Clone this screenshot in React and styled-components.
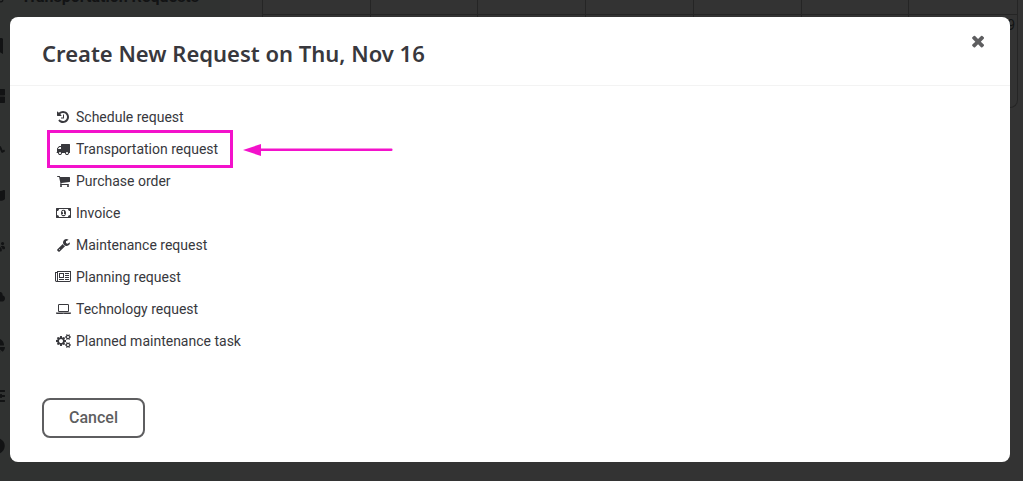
import React from 'react';
import styled, { createGlobalStyle } from 'styled-components';
import { FaBookmark, FaThLarge, FaWheelchair, FaFlag, FaUsers, FaCloud, FaChartPie, FaSlidersH, FaCircle, FaTruck } from 'react-icons/fa';

const GlobalStyle = createGlobalStyle`
    * {
        box-sizing: border-box;
    }
    body {
        margin: 0;
        overflow: hidden;
        font-family: Roboto, sans-serif;
        font-size: 14px;
        color: #38383d;
        background: #333333;
    }
`;

const Page = styled.div`
    display: grid;
    grid-template-columns: 230px 1fr;
    height: 100vh;
    overflow: hidden;
`;

const Sidebar = styled.nav`
    overflow: hidden;
    background: #303231;
    color: #121314;
`;

const SidebarLink = styled.a`
    display: flex;
    align-items: center;
    gap: 16px;
    height: 50px;
    margin-left: -11px;
    color: inherit;
    font-size: 16px;
    font-weight: 700;
    text-decoration: none;

    &:first-child {
        margin-top: -29px;
    }
`;

const Main = styled.main`
    padding: 0 5px 0 32px;
    overflow: hidden;
`;

const Calendar = styled.div`
    display: grid;
    grid-template-columns: repeat(7, 1fr);
    grid-template-rows: 15px 92px;
    border: 1px solid #252525;
    border-top: 0;
    border-radius: 0 0 8px 8px;
`;

const Day = styled.div`
    border-right: 1px solid #252525;
    border-bottom: ${(props) => (props.$last ? '0' : '1px solid #252525')};
    padding: 2px;
    font-size: 14px;
    text-align: right;
    color: #121314;

    &:nth-child(7n) {
        border-right: 0;
    }
`;

const Backdrop = styled.div`
    position: fixed;
    inset: 0;
    padding: 17px 13px 19px 10px;
`;

const Modal = styled.section`
    background: #ffffff;
    border-radius: 8px;
`;

const ModalHeader = styled.header`
    display: flex;
    justify-content: space-between;
    align-items: flex-start;
    padding: 15px 25px 14px 32px;
    border-bottom: 1px solid #f3f3f3;
`;

const Title = styled.h2`
    margin: 0;
    padding-top: 3px;
    font-family: 'Noto Sans', sans-serif;
    font-size: 22px;
    line-height: 36px;
    font-weight: 600;
`;

const CloseButton = styled.button`
    display: flex;
    padding: 0;
    border: 0;
    background: none;
    color: #5e5e60;
    cursor: pointer;
`;

const ModalBody = styled.div`
    padding: 15px 32px 24px;
`;

const RequestList = styled.ul`
    margin: 0 0 41px;
    padding: 0 8px;
    list-style: none;
`;

const RequestItem = styled.li`
    display: flex;
    align-items: center;
    gap: 13px;
`;

const RequestLink = styled.a`
    display: flex;
    align-items: center;
    gap: 4px;
    height: 32px;
    padding: 0 12px 0 4px;
    color: inherit;
    text-decoration: none;
    outline: ${(props) => (props.$marked ? '3px solid #f312cb' : 'none')};
`;

const IconBox = styled.span`
    display: flex;
    justify-content: center;
    width: 18px;
`;

const CancelButton = styled.button`
    display: block;
    height: 40px;
    padding: 0 25px 2px;
    border: 2px solid #5e5e60;
    border-radius: 8px;
    background: #ffffff;
    color: #5e5e60;
    font-family: inherit;
    font-size: 16px;
    font-weight: 500;
    cursor: pointer;
`;

const smallCog = 'v-140q0 -16 -149 -31q-12 -27 -30 -52q51 -113 51 -138q0 -4 -4 -7q-122 -71 -124 -71q-8 0 -46 47t-52 68q-20 -2 -30 -2t-30 2q-14 -21 -52 -68t-46 -47q-2 0 -124 71q-4 3 -4 7q0 25 51 138q-18 25 -30 52q-149 15 -149 31v140q0 16 149 31q13 29 30 52q-51 113 -51 138q0 4 4 7q4 2 35 20t59 34t30 16q8 0 46 -46.5t52 -67.5q20 2 30 2t30 -2q51 71 92 112l6 2q4 0 124 -70q4 -3 4 -7q0 -25 -51 -138q17 -23 30 -52q149 -15 149 -31z';

// y axis points up, baseline at 1536
const icons = {
    history: {
        width: 1536,
        path: 'M1536 640q0 -156 -61 -298t-164 -245t-245 -164t-298 -61q-172 0 -327 72.5t-264 204.5q-7 10 -6.5 22.5t8.5 20.5l137 138q10 9 25 9q16 -2 23 -12q73 -95 179 -147t225 -52q104 0 198.5 40.5t163.5 109.5t109.5 163.5t40.5 198.5t-40.5 198.5t-109.5 163.5t-163.5 109.5t-198.5 40.5q-98 0 -188 -35.5t-160 -101.5l137 -138q31 -30 14 -69q-17 -40 -59 -40h-448q-26 0 -45 19t-19 45v448q0 42 40 59q39 17 69 -14l130 -129q107 101 244.5 156.5t284.5 55.5q156 0 298 -61t245 -164t164 -245t61 -298zM896 928v-448q0 -14 -9 -23t-23 -9h-320q-14 0 -23 9t-9 23v64q0 14 9 23t23 9h224v352q0 14 9 23t23 9h64q14 0 23 -9t9 -23z',
    },
    truck: {
        width: 1792,
        path: 'M640 128q0 52 -38 90t-90 38t-90 -38t-38 -90t38 -90t90 -38t90 38t38 90zM256 640h384v256h-158q-13 0 -22 -9l-195 -195q-9 -9 -9 -22v-30zM1536 128q0 52 -38 90t-90 38t-90 -38t-38 -90t38 -90t90 -38t90 38t38 90zM1792 1216v-1024q0 -15 -4 -26.5t-13.5 -18.5t-16.5 -11.5t-23.5 -6t-22.5 -2t-25.5 0t-22.5 0.5q0 -106 -75 -181t-181 -75t-181 75t-75 181h-384q0 -106 -75 -181t-181 -75t-181 75t-75 181h-64q-3 0 -22.5 -0.5t-25.5 0t-22.5 2t-23.5 6t-16.5 11.5t-13.5 18.5t-4 26.5q0 26 19 45t45 19v320q0 8 -0.5 35t0 38t2.5 34.5t6.5 37t14 30.5t22.5 30l198 198q19 19 50.5 32t58.5 13h160v192q0 26 19 45t45 19h1024q26 0 45 -19t19 -45z',
    },
    cart: {
        width: 1664,
        path: 'M640 0q0 -52 -38 -90t-90 -38t-90 38t-38 90t38 90t90 38t90 -38t38 -90zM1536 0q0 -52 -38 -90t-90 -38t-90 38t-38 90t38 90t90 38t90 -38t38 -90zM1664 1088v-512q0 -24 -16.5 -42.5t-40.5 -21.5l-1044 -122q13 -60 13 -70q0 -16 -24 -64h920q26 0 45 -19t19 -45t-19 -45t-45 -19h-1024q-26 0 -45 19t-19 45q0 11 8 31.5t16 36t21.5 40t15.5 29.5l-177 823h-204q-26 0 -45 19t-19 45t19 45t45 19h256q16 0 28.5 -6.5t19.5 -15.5t13 -24.5t8 -26t5.5 -29.5t4.5 -26h1201q26 0 45 -19t19 -45z',
    },
    money: {
        width: 1920,
        path: 'M768 384h384v96h-128v448h-114l-148 -137l77 -80q42 37 55 57h2v-288h-128v-96zM1280 640q0 -70 -21 -142t-59.5 -134t-101.5 -101t-138 -39t-138 39t-101.5 101t-59.5 134t-21 142t21 142t59.5 134t101.5 101t138 39t138 -39t101.5 -101t59.5 -134t21 -142zM1792 384v512q-106 0 -181 75t-75 181h-1152q0 -106 -75 -181t-181 -75v-512q106 0 181 -75t75 -181h1152q0 106 75 181t181 75zM1920 1216v-1152q0 -26 -19 -45t-45 -19h-1792q-26 0 -45 19t-19 45v1152q0 26 19 45t45 19h1792q26 0 45 -19t19 -45z',
    },
    wrench: {
        width: 1664,
        path: 'M384 64q0 26 -19 45t-45 19t-45 -19t-19 -45t19 -45t45 -19t45 19t19 45zM1028 484l-682 -682q-37 -37 -90 -37q-52 0 -91 37l-106 108q-38 36 -38 90q0 53 38 91l681 681q39 -98 114.5 -173.5t173.5 -114.5zM1662 919q0 -39 -23 -106q-47 -134 -164.5 -217.5t-258.5 -83.5q-185 0 -316.5 131.5t-131.5 316.5t131.5 316.5t316.5 131.5q58 0 121.5 -16.5t107.5 -46.5q16 -11 16 -28t-16 -28l-293 -169v-224l193 -107q5 3 79 48.5t135.5 81t70.5 35.5q15 0 23.5 -10t8.5 -25z',
    },
    newspaper: {
        width: 2048,
        path: 'M1024 1024h-384v-384h384v384zM1152 384v-128h-640v128h640zM1152 1152v-640h-640v640h640zM1792 384v-128h-512v128h512zM1792 640v-128h-512v128h512zM1792 896v-128h-512v128h512zM1792 1152v-128h-512v128h512zM256 192v960h-128v-960q0 -26 19 -45t45 -19t45 19t19 45zM1920 192v1088h-1536v-1088q0 -33 -11 -64h1483q26 0 45 19t19 45zM2048 1408v-1216q0 -80 -56 -136t-136 -56h-1664q-80 0 -136 56t-56 136v1088h256v128h1792z',
    },
    laptop: {
        width: 1920,
        path: 'M416 256q-66 0 -113 47t-47 113v704q0 66 47 113t113 47h1088q66 0 113 -47t47 -113v-704q0 -66 -47 -113t-113 -47h-1088zM384 1120v-704q0 -13 9.5 -22.5t22.5 -9.5h1088q13 0 22.5 9.5t9.5 22.5v704q0 13 -9.5 22.5t-22.5 9.5h-1088q-13 0 -22.5 -9.5t-9.5 -22.5zM1760 192h160v-96q0 -40 -47 -68t-113 -28h-1600q-66 0 -113 28t-47 68v96h160h1600zM1040 96q16 0 16 16t-16 16h-160q-16 0 -16 -16t16 -16h160z',
    },
    cogs: {
        width: 1920,
        path: `M896 640q0 106 -75 181t-181 75t-181 -75t-75 -181t75 -181t181 -75t181 75t75 181zM1664 128q0 52 -38 90t-90 38t-90 -38t-38 -90q0 -53 37.5 -90.5t90.5 -37.5t90.5 37.5t37.5 90.5zM1664 1152q0 52 -38 90t-90 38t-90 -38t-38 -90q0 -53 37.5 -90.5t90.5 -37.5t90.5 37.5t37.5 90.5zM1280 731v-185q0 -10 -7 -19.5t-16 -10.5l-155 -24q-11 -35 -32 -76q34 -48 90 -115q7 -11 7 -20q0 -12 -7 -19q-23 -30 -82.5 -89.5t-78.5 -59.5q-11 0 -21 7l-115 90q-37 -19 -77 -31q-11 -108 -23 -155q-7 -24 -30 -24h-186q-11 0 -20 7.5t-10 17.5l-23 153q-34 10 -75 31l-118 -89q-7 -7 -20 -7q-11 0 -21 8q-144 133 -144 160q0 9 7 19q10 14 41 53t47 61q-23 44 -35 82l-152 24q-10 1 -17 9.5t-7 19.5v185q0 10 7 19.5t16 10.5l155 24q11 35 32 76q-34 48 -90 115q-7 11 -7 20q0 12 7 20q22 30 82 89t79 59q11 0 21 -7l115 -90q34 18 77 32q11 108 23 154q7 24 30 24h186q11 0 20 -7.5t10 -17.5l23 -153q34 -10 75 -31l118 89q8 7 20 7q11 0 21 -8q144 -133 144 -160q0 -8 -7 -19q-12 -16 -42 -54t-45 -60q23 -48 34 -82l152 -23q10 -2 17 -10.5t7 -19.5zM1920 198${smallCog}M1920 1222${smallCog}`,
    },
    times: {
        width: 1408,
        path: 'M1298 214q0 -40 -28 -68l-136 -136q-28 -28 -68 -28t-68 28l-294 294l-294 -294q-28 -28 -68 -28t-68 28l-136 136q-28 28 -28 68t28 68l294 294l-294 294q-28 28 -28 68t28 68l136 136q28 28 68 28t68 -28l294 -294l294 294q28 28 68 28t68 -28l136 -136q28 -28 28 -68t-28 -68l-294 -294l294 -294q28 -28 28 -68z',
    },
};

const Icon = ({ name, size = 14 }) => {
    const { width, path } = icons[name];
    return (
        <svg width={(width * size) / 1792} height={size} viewBox={`0 0 ${width} 1792`} fill="currentColor" overflow="visible" aria-hidden="true">
            <path transform="translate(0 1536) scale(1 -1)" d={path} />
        </svg>
    );
};

const Arrow = () => (
    <svg width="150" height="14" viewBox="0 0 150 14" fill="#f312cb" aria-hidden="true">
        <path d="M0 8L18 2V14Z" />
        <rect x="17" y="6.5" width="132.5" height="2.6" rx="1" />
    </svg>
);

const requests = [
    { icon: 'history', label: 'Schedule request' },
    { icon: 'truck', label: 'Transportation request', marked: true },
    { icon: 'cart', label: 'Purchase order' },
    { icon: 'money', label: 'Invoice' },
    { icon: 'wrench', label: 'Maintenance request' },
    { icon: 'newspaper', label: 'Planning request' },
    { icon: 'laptop', label: 'Technology request' },
    { icon: 'cogs', label: 'Planned maintenance task' },
];

const sidebarIcons = [FaBookmark, FaThLarge, FaWheelchair, FaFlag, FaUsers, FaCloud, FaChartPie, FaSlidersH, FaCircle];

const App = () => {
    return (
        <>
            <GlobalStyle />
            <Page>
                <Sidebar>
                    <SidebarLink href="#"><FaTruck size={16} />Transportation Requests</SidebarLink>
                    {sidebarIcons.map((SideIcon, i) => (
                        <SidebarLink href="#" key={i}><SideIcon size={16} /></SidebarLink>
                    ))}
                </Sidebar>
                <Main>
                    <Calendar>
                        {[...Array(14).keys()].map((i) => (
                            <Day key={i} $last={i > 6}>{i === 13 ? '9' : ''}</Day>
                        ))}
                    </Calendar>
                </Main>
            </Page>
            <Backdrop>
                <Modal role="dialog" aria-labelledby="modal-title">
                    <ModalHeader>
                        <Title id="modal-title">Create New Request on Thu, Nov 16</Title>
                        <CloseButton type="button" aria-label="Close"><Icon name="times" size={18} /></CloseButton>
                    </ModalHeader>
                    <ModalBody>
                        <RequestList>
                            {requests.map(({ icon, label, marked }) => (
                                <RequestItem key={label}>
                                    <RequestLink href="#" $marked={marked}>
                                        <IconBox><Icon name={icon} /></IconBox>
                                        {label}
                                    </RequestLink>
                                    {marked && <Arrow />}
                                </RequestItem>
                            ))}
                        </RequestList>
                        <CancelButton type="button">Cancel</CancelButton>
                    </ModalBody>
                </Modal>
            </Backdrop>
        </>
    );
};

export default App;
